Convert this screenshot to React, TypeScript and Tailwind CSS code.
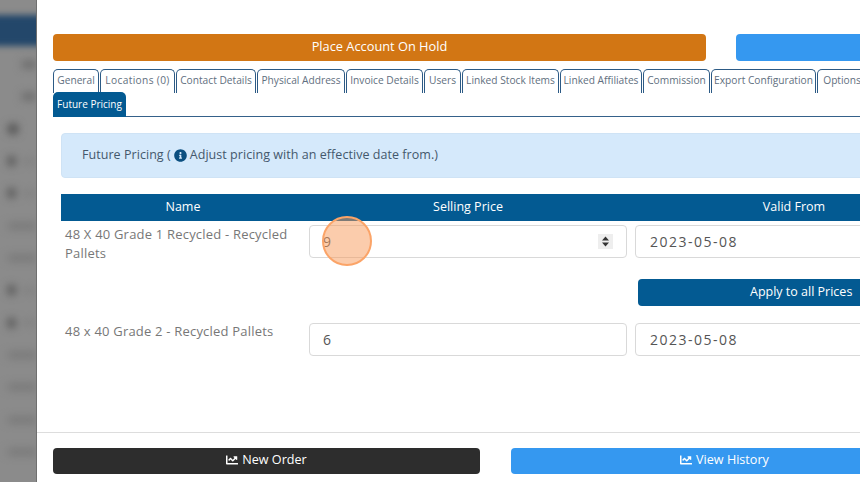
import { FaChartLine, FaInfoCircle } from 'react-icons/fa'

const tabs = [
  { label: 'General', width: 'w-[46px]' },
  { label: 'Locations (0)', width: 'w-[75px] tracking-[0.35px]' },
  { label: 'Contact Details', width: 'w-[80px]' },
  { label: 'Physical Address', width: 'w-[88px]' },
  { label: 'Invoice Details', width: 'w-[77px]' },
  { label: 'Users', width: 'w-[37px]' },
  { label: 'Linked Stock Items', width: 'w-[97px]' },
  { label: 'Linked Affiliates', width: 'w-[82px]' },
  { label: 'Commission', width: 'w-[67px]' },
  { label: 'Export Configuration', width: 'w-[105px]' },
  { label: 'Options', width: 'w-[50px]' },
]

// blurred menu rows behind the modal backdrop
const sideRows = [
  { icon: false, text: 'short' },
  { icon: false, text: 'short' },
  { icon: true, text: 'none' },
  { icon: true, text: 'short' },
  { icon: true, text: 'short' },
  { icon: false, text: 'long' },
  { icon: false, text: 'long' },
  { icon: true, text: 'short' },
  { icon: true, text: 'short' },
  { icon: false, text: 'long' },
  { icon: false, text: 'long' },
  { icon: false, text: 'long' },
  { icon: false, text: 'long' },
]

function Sidebar() {
  return (
    <div className="w-[37px] shrink-0 h-full bg-[#8b8b8b] border-r border-[#6f6f6f] overflow-hidden">
      <div className="h-[15px]" />
      <div className="h-[31px] bg-[#23476a] blur-[3px] -mx-2" />
      <div className="flex flex-col gap-[20.35px] pt-[12px] blur-[4px]">
        {sideRows.map((r, i) => (
          <div key={i} className="h-[12px] flex items-center gap-1 pl-2">
            {r.icon && <div className="w-[10px] h-[10px] bg-[#4c4c4c] rounded-sm" />}
            {r.text === 'short' && <div className={r.icon ? 'h-[5px] w-[20px] ml-1 bg-[#7e7e7e]' : 'h-[7px] w-[14px] ml-[14px] bg-[#686868]'} />}
            {r.text === 'long' && <div className="h-[6px] w-[30px] bg-[#757575]" />}
          </div>
        ))}
      </div>
    </div>
  )
}

function NumberInput({ value, spinner, date }: { value: string; spinner?: boolean; date?: boolean }) {
  return (
    <div className={`${date ? 'pl-[14px]' : 'pl-[13px]'} h-[33px] flex-1 rounded border border-[#d9d9d9] bg-white flex items-center justify-between pr-[13px] pb-[1px] text-[14px] text-[#555] tracking-[1.5px]`}>
      <span>{value}</span>
      {spinner && (
        <span className="w-[15px] h-[15px] bg-[#eeeeee] flex items-center justify-center">
          <svg width="9" height="11" viewBox="0 0 9 11">
            <path d="M4.5 0.5 8 4.5H1z M4.5 10.5 1 6.5h7z" fill="#333" />
          </svg>
        </span>
      )}
    </div>
  )
}

export default function App() {
  return (
    <div className="w-[860px] h-[482px] overflow-hidden flex bg-white font-['Open_Sans','Liberation_Sans',sans-serif] relative">
      <Sidebar />
      <div className="w-[1000px] shrink-0 flex flex-col">
        <div className="px-4 pt-[34px]">
          <div className="flex gap-[30px]">
            <div className="w-[653px] h-[27px] pb-[1px] rounded bg-[#d27614] text-white text-[12.8px] flex items-center justify-center">
              Place Account On Hold
            </div>
            <div className="w-[240px] h-[27px] rounded bg-[#3598f0]" />
          </div>

          <div className="mt-[8px] border-b border-[#35618a] h-[48px]">
            <div className="flex flex-wrap gap-x-[1px] w-[840px]">
              {tabs.map((t) => (
                <div
                  key={t.label}
                  className={`${t.width} h-[24px] pb-[1px] border border-b-0 border-[#2c5a85] rounded-t-[5px] flex items-center justify-center text-[10.2px] text-[#5f6f80] whitespace-nowrap`}
                >
                  {t.label}
                </div>
              ))}
              <div className="w-[73px] h-[25px] -mt-[1px] pb-[1px] rounded-t-[5px] bg-[#035a92] text-white text-[10px] flex items-center justify-center whitespace-nowrap">
                Future Pricing
              </div>
            </div>
          </div>
        </div>

        <div className="pl-[24px] pr-[20px] pt-[16px] w-[920px]">
          <div className="h-[45px] rounded border border-[#cfe3f5] bg-[#d5e9fb] flex items-center gap-[3px] pl-[20px] text-[12.5px] text-[#44586c] tracking-[0.05px]">
            <span>Future Pricing (</span>
            <FaInfoCircle className="text-[#0b4f80] text-[13px]" />
            <span>Adjust pricing with an effective date from.)</span>
          </div>

          <div className="mt-[16px] h-[27px] bg-[#035a92] text-white text-[12.5px] grid grid-cols-[244px_326px_326px] items-center text-center">
            <div>Name</div>
            <div>Selling Price</div>
            <div>Valid From</div>
          </div>

          <div className="grid grid-cols-[244px_326px_326px] mt-[4px]">
            <div className="pl-[4px] pr-[8px] text-[13px] leading-[19px] text-[#777] tracking-[0.2px]">
              48 X 40 Grade 1 Recycled - Recycled Pallets
            </div>
            <div className="px-[4px] flex">
              <NumberInput value="9" spinner />
            </div>
            <div className="px-[4px] flex">
              <NumberInput value="2023-05-08" date />
            </div>
          </div>

          <div className="grid grid-cols-[244px_326px_326px] mt-[16px]">
            <div className="col-start-3 pl-[7px] pr-[4px]">
              <div className="h-[27px] rounded bg-[#035a92] text-white text-[12.5px] flex items-center pl-[112px]">
                Apply to all Prices
              </div>
            </div>
          </div>

          <div className="grid grid-cols-[244px_326px_326px] mt-[17px]">
            <div className="pl-[4px] pr-[8px] -mt-[1px] text-[13px] leading-[19px] text-[#777] tracking-[0.2px]">
              48 x 40 Grade 2 - Recycled Pallets
            </div>
            <div className="px-[4px] flex">
              <NumberInput value="6" />
            </div>
            <div className="px-[4px] flex">
              <NumberInput value="2023-05-08" date />
            </div>
          </div>
        </div>

        <div className="mt-[76px] border-t border-[#dddddd] pt-[15px] px-4 flex gap-[31px]">
          <div className="w-[427px] h-[26px] pb-[2px] rounded bg-[#2d2d2d] text-white text-[12.6px] flex items-center justify-center gap-[4px]">
            <FaChartLine className="text-[12px]" /> New Order
          </div>
          <div className="w-[427px] h-[26px] pb-[2px] rounded bg-[#3598f0] text-white text-[12.6px] flex items-center justify-center gap-[4px]">
            <FaChartLine className="text-[12px]" /> View History
          </div>
        </div>
      </div>

      {/* click highlight */}
      <div className="absolute left-[322px] top-[216px] w-[50px] h-[50px] rounded-full border-2 border-[#fba468] bg-[#f89a5a]/50" />
    </div>
  )
}
